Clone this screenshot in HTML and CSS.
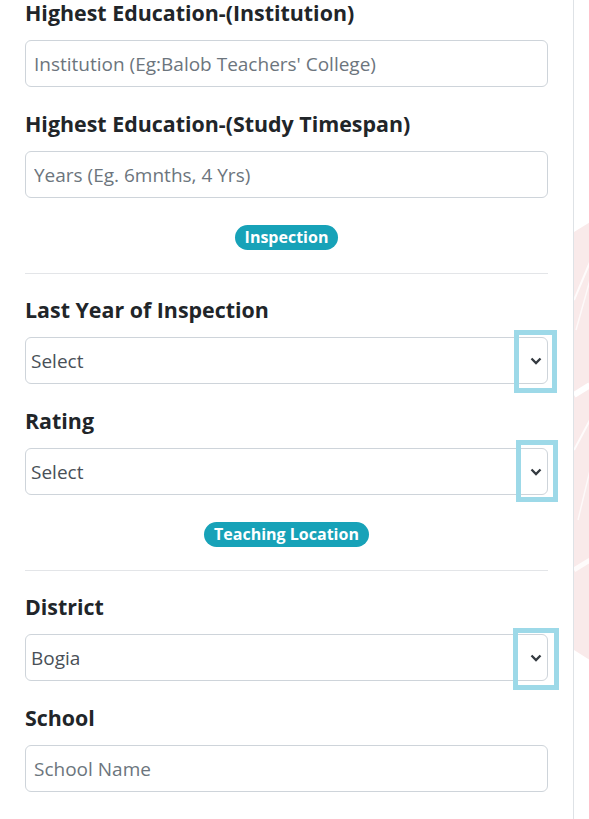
FILE: index.html
```html
<!DOCTYPE html>
<html lang="en">
<head>
<meta charset="utf-8">
<title>Teacher Form</title>
<link rel="stylesheet" href="styles.css">
</head>
<body>
<div class="page">
  <main class="panel">
    <div class="group">
      <label class="label">Highest Education-(Institution)</label>
      <input class="control" type="text" placeholder="Institution (Eg:Balob Teachers' College)">
    </div>
    <div class="group">
      <label class="label">Highest Education-(Study Timespan)</label>
      <input class="control" type="text" placeholder="Years (Eg. 6mnths, 4 Yrs)">
    </div>
    <div class="divider">
      <span class="badge">Inspection</span>
      <hr class="rule">
    </div>
    <div class="group">
      <label class="label">Last Year of Inspection</label>
      <div class="select-wrap hl-a">
        <select class="control select"><option>Select</option></select>
        <svg class="chev" width="12" height="8" viewBox="0 0 12 8"><polyline points="1.5,1.5 6,6 10.5,1.5" fill="none" stroke="#343a40" stroke-width="2.3"/></svg>
      </div>
    </div>
    <div class="group">
      <label class="label">Rating</label>
      <div class="select-wrap hl-b">
        <select class="control select"><option>Select</option></select>
        <svg class="chev" width="12" height="8" viewBox="0 0 12 8"><polyline points="1.5,1.5 6,6 10.5,1.5" fill="none" stroke="#343a40" stroke-width="2.3"/></svg>
      </div>
    </div>
    <div class="divider">
      <span class="badge">Teaching Location</span>
      <hr class="rule">
    </div>
    <div class="group">
      <label class="label">District</label>
      <div class="select-wrap hl-c">
        <select class="control select"><option>Bogia</option></select>
        <svg class="chev" width="12" height="8" viewBox="0 0 12 8"><polyline points="1.5,1.5 6,6 10.5,1.5" fill="none" stroke="#343a40" stroke-width="2.3"/></svg>
      </div>
    </div>
    <div class="group">
      <label class="label">School</label>
      <input class="control" type="text" placeholder="School Name">
    </div>
  </main>
  <aside class="side">
    <svg class="decor" width="16" height="819" viewBox="0 0 16 819">
      <polygon points="0,232 16,222 16,660 0,650" fill="#f9eaea"/>
      <polyline points="0,300 16,262" stroke="#ffffff" stroke-width="2" fill="none" opacity="0.8"/>
      <polyline points="2,330 16,280" stroke="#ffffff" stroke-width="1.5" fill="none" opacity="0.7"/>
      <polyline points="0,395 16,385" stroke="#ffffff" stroke-width="6" fill="none"/>
      <polyline points="0,450 16,420" stroke="#ffffff" stroke-width="2" fill="none" opacity="0.8"/>
      <polyline points="4,520 16,470" stroke="#ffffff" stroke-width="1.5" fill="none" opacity="0.7"/>
      <polyline points="0,570 16,560" stroke="#ffffff" stroke-width="5" fill="none" opacity="0.8"/>
    </svg>
  </aside>
</div>
</body>
</html>
```
FILE: styles.css
```css
* { box-sizing: border-box; }
html, body { margin: 0; padding: 0; background: #ffffff; }
body {
  font-family: "Open Sans", "Noto Sans", "Liberation Sans", sans-serif;
  color: #212529;
}
.page {
  display: flex;
  min-height: 819px;
  overflow: hidden;
}
.panel {
  width: 574px;
  flex: none;
  padding: 0 25px 0 25px;
  border-right: 1px solid #dee2e6;
  display: flex;
  flex-direction: column;
}
.side {
  flex: 1;
  position: relative;
}
.decor { display: block; }
.group {
  display: flex;
  flex-direction: column;
  margin-bottom: 24px;
}
.label {
  font-size: 21.4px;
  line-height: 26px;
  font-weight: 700;
  margin-bottom: 14px;
  color: #212529;
}
.control {
  width: 100%;
  height: 47px;
  border: 1px solid #ced4da;
  border-radius: 6px;
  padding: 0 8px;
  font-family: "Open Sans", "Noto Sans", "Liberation Sans", sans-serif;
  font-size: 19px;
  color: #495057;
  background: #ffffff;
  outline: none;
}
.control::placeholder { color: #6c757d; opacity: 1; }
.select {
  appearance: none;
  -webkit-appearance: none;
  padding: 0 36px 0 5px;
}
.select-wrap { position: relative; }
.chev {
  position: absolute;
  right: 6px;
  top: 50%;
  margin-top: -4px;
  pointer-events: none;
}
.select-wrap::after {
  content: "";
  position: absolute;
  border: 5px solid #9dd9e8;
  pointer-events: none;
}
.hl-a::after { left: 489px; right: -9px; top: -7px; bottom: -9px; }
.hl-b::after { left: 491px; right: -10px; top: -8px; bottom: -7px; }
.hl-c::after { left: 488px; right: -11px; top: -6px; bottom: -9px; }
.divider {
  display: flex;
  flex-direction: column;
  align-items: center;
  margin-top: 3px;
}
.badge {
  display: inline-block;
  background: #17a2b8;
  color: #ffffff;
  font-weight: 700;
  font-size: 16px;
  line-height: 25px;
  height: 25px;
  padding: 0 10px;
  border-radius: 13px;
}
.rule {
  width: 100%;
  margin: 23px 0 23px 0;
  border: 0;
  border-top: 1px solid #e3e5e8;
  height: 0;
}
```
